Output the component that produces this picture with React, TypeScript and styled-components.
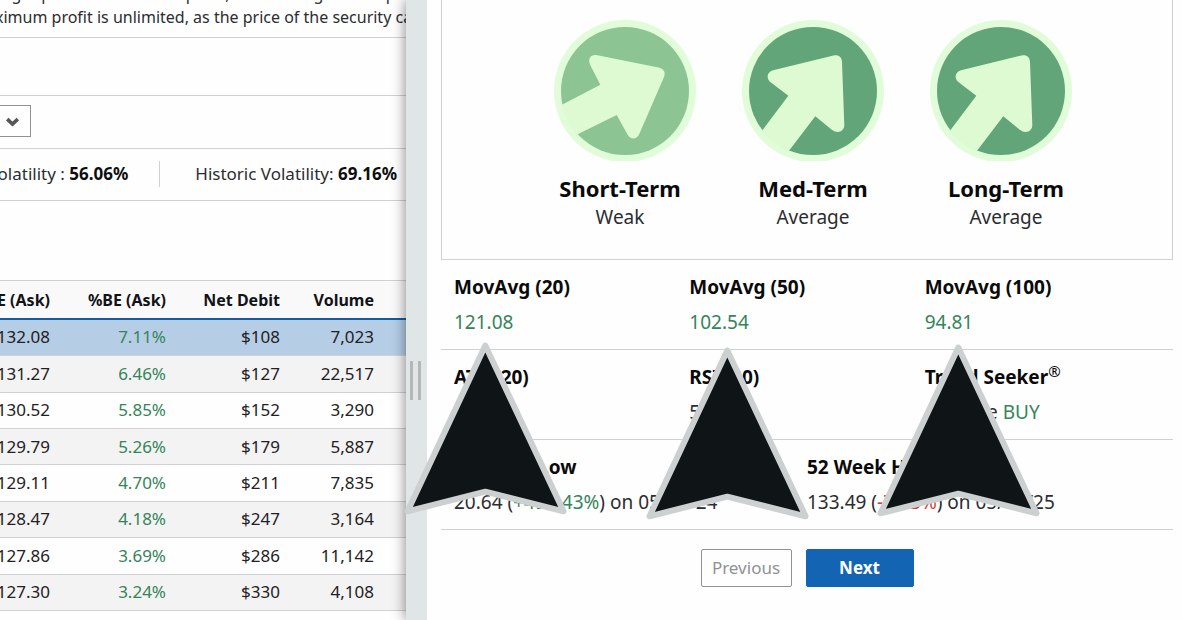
import React from "react";
import styled, { createGlobalStyle } from "styled-components";

const GlobalStyle = createGlobalStyle`
  *, *::before, *::after { box-sizing: border-box; }
  body {
    margin: 0;
    background: #fefefe;
    color: #2b2d30;
    font-family: "Noto Sans", "Open Sans", sans-serif;
    overflow: hidden;
  }
  button, select { font-family: inherit; }
`;

const line = "#cfd1d3";
const green = "#35845a";
const red = "#cf3a35";

const Page = styled.div`
  display: grid;
  grid-template-columns: minmax(0, 29fr) 21px minmax(0, 54fr);
  min-height: 100vh;
`;

const OptionsPane = styled.section`
  overflow: hidden;
  white-space: nowrap;
`;

const Intro = styled.div`
  display: flex;
  flex-direction: column;
  justify-content: flex-end;
  height: 38px;
  padding-bottom: 8px;
  overflow: hidden;
  border-bottom: 1px solid ${line};
  font-size: 16px;
  line-height: 23px;
`;

const IntroText = styled.p`
  margin: 0 0 0 -5px;
`;

const Spacer = styled.div`
  height: 58px;
  border-bottom: 1px solid ${line};
`;

const FilterBar = styled.div`
  display: flex;
  align-items: center;
  height: 53px;
  padding-bottom: 2px;
  border-bottom: 1px solid ${line};
`;

const SelectWrap = styled.div`
  position: relative;
  width: 31px;
  height: 32px;

  svg {
    position: absolute;
    right: 12px;
    top: 12px;
    pointer-events: none;
  }
`;

const Select = styled.select`
  width: 100%;
  height: 100%;
  appearance: none;
  border: 1px solid #8f9194;
  border-left: 0;
  border-radius: 0;
  background: #fefefe;
`;

const VolatilityBar = styled.div`
  display: flex;
  align-items: center;
  justify-content: flex-end;
  height: 52px;
  padding: 0 9px 2px 0;
  border-bottom: 1px solid ${line};
  font-size: 17px;
  line-height: 24px;

  > * { flex-shrink: 0; }
  strong { color: #0d0e10; }
`;

const Separator = styled.span`
  width: 1px;
  height: 26px;
  margin: 0 35px 0 31px;
  background: ${line};
`;

const OptionsTable = styled.table`
  width: calc(100% + 16px);
  height: 331px;
  margin: 79px 0 0 -16px;
  border-collapse: collapse;
  table-layout: fixed;
  border-top: 1px solid ${line};
  color: #1f2124;
  font-size: 17px;
  line-height: 24px;

  th, td {
    padding: 0 16px 0 0;
    text-align: right;
  }
  th { padding-top: 2px; }
  th:last-child, td:last-child { padding-right: 32px; }
`;

const HeadRow = styled.tr`
  height: 38px;
  background: #f9f9f9;
  border-bottom: 2px solid #145c9e;
  color: #121316;
  font-size: 16px;
`;

const Row = styled.tr<{ $selected?: boolean }>`
  border-bottom: 1px solid ${line};
  background: ${(p) => (p.$selected ? "#b5cee6" : "#fefefe")};
  &:nth-child(even) { background: #f2f3f2; }
`;

const Col = styled.col<{ $w?: number }>`
  width: ${(p) => (p.$w ? `${p.$w}px` : "auto")};
`;

const Gain = styled.span`color: ${green};`;
const Loss = styled.span`color: ${red};`;

const Splitter = styled.div`
  position: relative;
  z-index: 1;
  display: flex;
  gap: 5px;
  padding: 361px 4px 0;
  background: #e0e6e6;
  box-shadow: 0 0 14px rgba(0, 0, 0, 0.5);
`;

const Grip = styled.span`
  width: 3px;
  height: 39px;
  background: #b5b7b7;
`;

const OpinionPane = styled.section`
  position: relative;
  z-index: 2;
  padding: 0 10px 0 14px;
  background: #fefefe;
`;

const TrendBox = styled.div`
  height: 260px;
  padding-top: 20px;
  border: solid ${line};
  border-width: 0 1px 1px;
`;

const TrendIcons = styled.div`
  display: flex;
  justify-content: center;
  gap: 46px;
  padding-left: 11px;
`;

const TrendLabels = styled.div`
  display: grid;
  grid-template-columns: repeat(3, 193px);
  justify-content: center;
  padding: 13px 0 0 12px;
  text-align: center;
`;

const TrendTitle = styled.div`
  color: #0a0a0b;
  font-size: 22px;
  font-weight: 700;
  line-height: 28px;
`;

const TrendValue = styled.div`
  font-size: 19px;
  line-height: 30px;
`;

const Stats = styled.div`
  position: relative;
`;

const StatRow = styled.div<{ $cols: number }>`
  display: grid;
  grid-template-columns: repeat(${(p) => p.$cols}, 1fr);
  height: 90px;
  padding: 12px 13px 0;
  border-bottom: 1px solid ${line};
  white-space: nowrap;
`;

const StatTitle = styled.div`
  margin-bottom: 5px;
  color: #0a0a0b;
  font-size: 19px;
  font-weight: 700;
  line-height: 30px;

  sup {
    font-size: 15px;
    font-weight: 400;
    line-height: 0;
    vertical-align: 7px;
  }
`;

const StatValue = styled.div`
  font-size: 19px;
  line-height: 30px;
`;

const Actions = styled.div`
  display: flex;
  justify-content: center;
  gap: 14px;
  padding-top: 19px;
`;

const Button = styled.button<{ $primary?: boolean }>`
  width: ${(p) => (p.$primary ? 108 : 91)}px;
  height: 38px;
  padding: 0 0 2px;
  border: 1px solid ${(p) => (p.$primary ? "#1365b3" : "#8f9194")};
  border-radius: 2px;
  background: ${(p) => (p.$primary ? "#1365b3" : "#fefefe")};
  color: ${(p) => (p.$primary ? "#fff" : "#8f9194")};
  font-size: 17px;
  font-weight: ${(p) => (p.$primary ? 700 : 400)};
`;

const PointerSvg = styled.svg<{ $x: number; $y: number }>`
  position: absolute;
  left: ${(p) => p.$x}px;
  top: ${(p) => p.$y}px;
  z-index: 3;
  pointer-events: none;
`;

const Pointer = ({ x, y }: { x: number; y: number }) => (
  <PointerSvg $x={x} $y={y} width="166" height="176" viewBox="0 0 166 176" aria-hidden="true">
    <path
      d="M82.3 5.5 L4.5 171.3 L82.3 151.7 L160.6 171.3 Z"
      fill="#0f1517"
      stroke="#cdd0d1"
      strokeWidth="6"
      strokeLinejoin="round"
    />
  </PointerSvg>
);

const arrows = {
  weak: {
    disc: "#8cc494",
    path: "M46.3 64.7 L36.5 45.5 C33 38.5 37 34 43.5 35.2 L104.5 47.5 C110 48.7 112 52.5 109.8 57.5 L85.5 113.5 C83 119.8 76.5 120 73.5 114.5 L62.7 95 L-14.1 133 L-29 104 Z",
  },
  average: {
    disc: "#61a578",
    path: "M46.3 75.7 L28.3 62 C23.5 57.5 25.5 51.8 31 50.3 L91.5 35.5 C96.5 34.5 99.8 37 100 42 L102.3 105 C102.3 111.5 95.5 114.5 89.5 109.5 L73.3 96.3 L22 163.5 L-4 142.5 Z",
  },
};

type Strength = keyof typeof arrows;

const TrendIcon = ({ id, strength }: { id: string; strength: Strength }) => (
  <svg width="142" height="141" viewBox="0 0 142 141" aria-hidden="true">
    <clipPath id={id}>
      <circle cx="71" cy="71" r="65" />
    </clipPath>
    <circle cx="71" cy="71" r="71" fill="#e1fcd9" />
    <circle cx="71" cy="71" r="64" fill={arrows[strength].disc} />
    <path d={arrows[strength].path} fill="#ddfad3" clipPath={`url(#${id})`} />
  </svg>
);

const trends: { title: string; value: string; strength: Strength }[] = [
  { title: "Short-Term", value: "Weak", strength: "weak" },
  { title: "Med-Term", value: "Average", strength: "average" },
  { title: "Long-Term", value: "Average", strength: "average" },
];

const options = [
  ["132.08", "7.11%", "$108", "7,023"],
  ["131.27", "6.46%", "$127", "22,517"],
  ["130.52", "5.85%", "$152", "3,290"],
  ["129.79", "5.26%", "$179", "5,887"],
  ["129.11", "4.70%", "$211", "7,835"],
  ["128.47", "4.18%", "$247", "3,164"],
  ["127.86", "3.69%", "$286", "11,142"],
  ["127.30", "3.24%", "$330", "4,108"],
];

const Stat = ({ title, children }: { title: React.ReactNode; children: React.ReactNode }) => (
  <div>
    <StatTitle>{title}</StatTitle>
    <StatValue>{children}</StatValue>
  </div>
);

export default function App() {
  return (
    <>
      <GlobalStyle />
      <Page>
        <OptionsPane>
          <Intro>
            <IntroText>
              tright purchase of a call option, where the goal is to pro
              <br />
              ximum profit is unlimited, as the price of the security ca
            </IntroText>
          </Intro>
          <Spacer />
          <FilterBar>
            <SelectWrap>
              <Select aria-label="Expiration" />
              <svg width="13" height="10" viewBox="0 0 13 10" aria-hidden="true">
                <path d="M1.2 2.2 L6.5 7 L11.8 2.2" fill="none" stroke="#555" strokeWidth="3.6" />
              </svg>
            </SelectWrap>
          </FilterBar>
          <VolatilityBar>
            <span>
              olatility : <strong>56.06%</strong>
            </span>
            <Separator />
            <span>
              Historic Volatility: <strong>69.16%</strong>
            </span>
          </VolatilityBar>
          <OptionsTable>
            <colgroup>
              <Col $w={82} />
              <Col $w={116} />
              <Col $w={114} />
              <Col />
            </colgroup>
            <thead>
              <HeadRow>
                <th>E (Ask)</th>
                <th>%BE (Ask)</th>
                <th>Net Debit</th>
                <th>Volume</th>
              </HeadRow>
            </thead>
            <tbody>
              {options.map(([be, pct, debit, volume], i) => (
                <Row key={be} $selected={i === 0}>
                  <td>{be}</td>
                  <td>
                    <Gain>{pct}</Gain>
                  </td>
                  <td>{debit}</td>
                  <td>{volume}</td>
                </Row>
              ))}
            </tbody>
          </OptionsTable>
        </OptionsPane>

        <Splitter>
          <Grip />
          <Grip />
        </Splitter>

        <OpinionPane>
          <TrendBox>
            <TrendIcons>
              {trends.map((t) => (
                <TrendIcon key={t.title} id={`disc-${t.title}`} strength={t.strength} />
              ))}
            </TrendIcons>
            <TrendLabels>
              {trends.map((t) => (
                <div key={t.title}>
                  <TrendTitle>{t.title}</TrendTitle>
                  <TrendValue>{t.value}</TrendValue>
                </div>
              ))}
            </TrendLabels>
          </TrendBox>
          <Stats>
            <StatRow $cols={3}>
              <Stat title="MovAvg (20)">
                <Gain>121.08</Gain>
              </Stat>
              <Stat title="MovAvg (50)">
                <Gain>102.54</Gain>
              </Stat>
              <Stat title="MovAvg (100)">
                <Gain>94.81</Gain>
              </Stat>
            </StatRow>
            <StatRow $cols={3}>
              <Stat title="ATR (20)">4.51</Stat>
              <Stat title="RSI (20)">58.15</Stat>
              <Stat
                title={
                  <>
                    Trend Seeker<sup>®</sup>
                  </>
                }
              >
                Average <Gain>BUY</Gain>
              </Stat>
            </StatRow>
            <StatRow $cols={2}>
              <Stat title="52 Week Low">
                20.64 (<Gain>+497.43%</Gain>) on 05/01/24
              </Stat>
              <Stat title="52 Week High">
                133.49 (<Loss>-7.63%</Loss>) on 05/14/25
              </Stat>
            </StatRow>
            <Pointer x={-38} y={80} />
            <Pointer x={204} y={85} />
            <Pointer x={435} y={82} />
          </Stats>
          <Actions>
            <Button type="button">Previous</Button>
            <Button type="button" $primary>
              Next
            </Button>
          </Actions>
        </OpinionPane>
      </Page>
    </>
  );
}
